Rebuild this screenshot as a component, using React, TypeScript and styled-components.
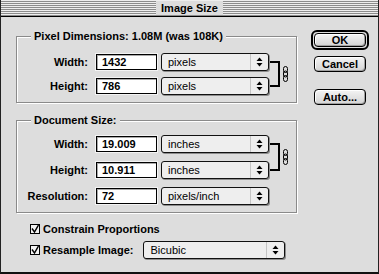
import React from "react";
import styled, { createGlobalStyle } from "styled-components";

const Global = createGlobalStyle`
  html, body { margin: 0; padding: 0; background: #dddddd; }
  body {
    font-family: "Liberation Sans", Arial, sans-serif;
    font-size: 11px;
    font-weight: bold;
    color: #000;
  }
`;

const Window = styled.div`
  width: 379px;
  height: 274px;
  box-sizing: border-box;
  background: #dddddd;
  border-left: 1px solid #222;
  border-right: 1px solid #222;
  border-bottom: 2px solid #111;
  display: flex;
  flex-direction: column;
  overflow: hidden;
`;

const TitleBar = styled.div`
  height: 16px;
  flex: none;
  border-bottom: 1px solid #000;
  background: repeating-linear-gradient(to bottom, #eeeeee 0 1px, #8c8c8c 1px 2px);
  display: flex;
  align-items: center;
  justify-content: center;
`;

const Title = styled.span`
  background: #dddddd;
  padding: 0 5px;
  height: 14px;
  line-height: 14px;
  font-size: 11px;
`;

const Body = styled.div`
  flex: 1;
  display: flex;
  padding: 12px 0 0 15px;
  gap: 14px;
`;

const Main = styled.div`
  width: 281px;
  display: flex;
  flex-direction: column;
`;

const Group = styled.fieldset<{ $pt: number; $pb: number; $mt: number }>`
  margin: ${(p) => p.$mt}px 0 0 0;
  min-width: 0;
  padding: ${(p) => p.$pt}px 0 ${(p) => p.$pb}px 0;
  border: 1px solid #8a8a8a;
  box-shadow: inset 1px 1px 0 #ffffff, 1px 1px 0 #ffffff;
`;

const Legend = styled.legend`
  margin-left: 14px;
  padding: 0 3px;
  line-height: 14px;
  background: #dddddd;
`;

const Fields = styled.div<{ $rows: number; $gap: number }>`
  display: grid;
  grid-template-columns: 79px 65px 108px 11px 11px;
  grid-template-rows: repeat(${(p) => p.$rows}, 18px);
  row-gap: ${(p) => p.$gap}px;
  align-items: center;
`;

const Label = styled.label`
  grid-column: 1;
  text-align: right;
  padding-right: 8px;
  white-space: nowrap;
`;

const Input = styled.input`
  grid-column: 2;
  width: 61px;
  height: 16px;
  box-sizing: border-box;
  margin: 0;
  border: 1px solid #000;
  background: #ffffff;
  box-shadow: 0 0 0 1px #f4f4f4, inset 1px 1px 0 #aaaaaa;
  padding: 0 0 0 5px;
  font: inherit;
  color: #000;
  outline: none;
`;

const Popup = styled.div<{ $w?: number; $ml?: number }>`
  width: ${(p) => p.$w ?? 108}px;
  margin-left: ${(p) => p.$ml ?? 0}px;
  height: 18px;
  box-sizing: border-box;
  border: 1px solid #111;
  border-radius: 3px;
  background: #eeeeee;
  box-shadow: 1px 1px 0 #8d8d8d;
  display: flex;
  align-items: stretch;
`;

const PopupText = styled.span`
  flex: 1;
  padding-left: 6px;
  line-height: 16px;
  font-weight: normal;
  white-space: nowrap;
`;

const PopupArrows = styled.span`
  width: 17px;
  border-left: 1px solid #c4c4c4;
  display: flex;
  align-items: center;
  justify-content: center;
`;

const Bracket = styled.div`
  grid-column: 4;
  grid-row: 1 / span 2;
  align-self: stretch;
  margin: 8px 0 8px 1px;
  border-top: 2px solid #000;
  border-right: 2px solid #000;
  border-bottom: 2px solid #000;
`;

const LinkIcon = styled.div`
  grid-column: 5;
  grid-row: 1 / span 2;
  align-self: center;
  justify-self: center;
  display: flex;
`;

const Options = styled.div`
  margin-top: 9px;
  padding-left: 14px;
  display: flex;
  flex-direction: column;
  gap: 5px;
`;

const OptionRow = styled.div`
  display: flex;
  align-items: center;
  gap: 3px;
  min-height: 14px;
`;

const Check = styled.span`
  width: 10px;
  height: 10px;
  box-sizing: border-box;
  border: 1px solid #000;
  background: #f2f2f2;
  display: flex;
  align-items: center;
  justify-content: center;
`;

const Buttons = styled.div`
  display: flex;
  flex-direction: column;
  align-items: center;
  width: 58px;
  padding-top: 1px;
`;

const DefaultRing = styled.div`
  border: 2px solid #000;
  border-radius: 6px;
  padding: 1px;
  display: flex;
`;

const Button = styled.button<{ $mt?: number; $h?: number }>`
  width: 52px;
  height: ${(p) => p.$h ?? 16}px;
  margin: ${(p) => p.$mt ?? 0}px 0 0 0;
  padding: 0;
  box-sizing: border-box;
  border: 1px solid #000;
  border-radius: 4px;
  background: linear-gradient(#f4f4f4, #d4d4d4);
  box-shadow: inset -1px -1px 0 #a0a0a0, inset 1px 1px 0 #ffffff;
  font: inherit;
  color: #000;
  line-height: 12px;
`;

const Arrows = () => (
  <svg width="7" height="10" viewBox="0 0 7 10">
    <path d="M3.5 0.5 L6.5 4 L0.5 4 Z" fill="#000" />
    <path d="M0.5 6 L6.5 6 L3.5 9.5 Z" fill="#000" />
  </svg>
);

const Chain = () => (
  <svg width="5" height="16" viewBox="0 0 5 16">
    <rect x="0.5" y="0.5" width="4" height="6" rx="2" fill="none" stroke="#000" strokeWidth="1" />
    <rect x="0.5" y="5" width="4" height="6" rx="2" fill="none" stroke="#000" strokeWidth="1" />
    <rect x="0.5" y="9.5" width="4" height="6" rx="2" fill="none" stroke="#000" strokeWidth="1" />
  </svg>
);

const Tick = () => (
  <svg width="8" height="8" viewBox="0 0 8 8">
    <path d="M1 3.5 L3.5 7 L7.5 0" fill="none" stroke="#000" strokeWidth="1.4" />
  </svg>
);

type Row = { label: string; value: string; unit: string };

const FieldRow = ({ row, index }: { row: Row; index: number }) => (
  <>
    <Label style={{ gridRow: index + 1 }}>{row.label}</Label>
    <Input readOnly value={row.value} style={{ gridRow: index + 1 }} />
    <Popup style={{ gridColumn: 3, gridRow: index + 1 }}>
      <PopupText>{row.unit}</PopupText>
      <PopupArrows>
        <Arrows />
      </PopupArrows>
    </Popup>
  </>
);

const pixelRows: Row[] = [
  { label: "Width:", value: "1432", unit: "pixels" },
  { label: "Height:", value: "786", unit: "pixels" },
];

const docRows: Row[] = [
  { label: "Width:", value: "19.009", unit: "inches" },
  { label: "Height:", value: "10.911", unit: "inches" },
  { label: "Resolution:", value: "72", unit: "pixels/inch" },
];

export default function App() {
  return (
    <>
      <Global />
      <Window>
        <TitleBar>
          <Title>Image Size</Title>
        </TitleBar>
        <Body>
          <Main>
            <Group $pt={10} $pb={7} $mt={0}>
              <Legend>Pixel Dimensions: 1.08M (was 108K)</Legend>
              <Fields $rows={2} $gap={6}>
                {pixelRows.map((r, i) => (
                  <FieldRow key={i} row={r} index={i} />
                ))}
                <Bracket />
                <LinkIcon>
                  <Chain />
                </LinkIcon>
              </Fields>
            </Group>
            <Group $pt={8} $pb={7} $mt={10}>
              <Legend>Document Size:</Legend>
              <Fields $rows={3} $gap={8}>
                {docRows.map((r, i) => (
                  <FieldRow key={i} row={r} index={i} />
                ))}
                <Bracket />
                <LinkIcon>
                  <Chain />
                </LinkIcon>
              </Fields>
            </Group>
            <Options>
              <OptionRow>
                <Check>
                  <Tick />
                </Check>
                <span>Constrain Proportions</span>
              </OptionRow>
              <OptionRow>
                <Check>
                  <Tick />
                </Check>
                <span>Resample Image:</span>
                <Popup $w={142} $ml={7}>
                  <PopupText>Bicubic</PopupText>
                  <PopupArrows>
                    <Arrows />
                  </PopupArrows>
                </Popup>
              </OptionRow>
            </Options>
          </Main>
          <Buttons>
            <DefaultRing>
              <Button $h={14}>OK</Button>
            </DefaultRing>
            <Button $mt={6}>Cancel</Button>
            <Button $mt={17}>Auto...</Button>
          </Buttons>
        </Body>
      </Window>
    </>
  );
}
